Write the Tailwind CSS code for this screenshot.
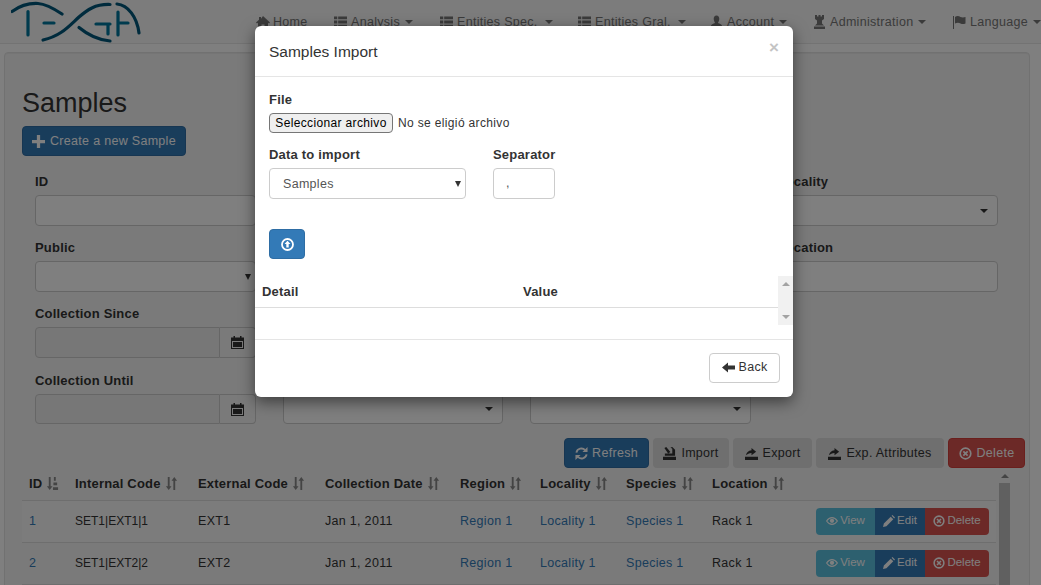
<!DOCTYPE html>
<html lang="en">
<head>
<meta charset="utf-8">
<title>Samples</title>
<script src="https://cdn.jsdelivr.net/npm/@tailwindcss/browser@4"></script>
</head>
<body class="relative h-[585px] w-[1041px] overflow-hidden bg-white font-['Liberation_Sans',Arial,sans-serif] text-[12.5px] tracking-[0.3px] text-[#333]">
<svg class="hidden">
  <symbol id="list" viewBox="0 0 14 14"><path fill="currentColor" d="M0 1h3.5v3H0zM4.5 1H14v3H4.500zM0 5.500h3.500v3H0zM4.500 5.500H14v3H4.500zM0 10h3.500v3H0zM4.500 10H14v3H4.500z"/></symbol>
  <symbol id="export" viewBox="0 0 14 14"><path fill="currentColor" d="M0 10.500h14V14H0zM1 9c.5-3 2.500-5 6-5.500V1l5 4-5 4V6.500C4.500 6.700 2.500 7.500 1 9z"/></symbol>
  <symbol id="import" viewBox="0 0 14 14"><path fill="currentColor" d="M0 10.500h14V14H0zM2 9.500V7h8V2L8 .5l2-.5 3 3v6.500zM1.500 1l2-1L8 5.500 5.500 7z"/></symbol>
  <symbol id="xcircle" viewBox="0 0 14 14"><circle cx="7" cy="7" r="5.700" fill="none" stroke="currentColor" stroke-width="1.800"/><path d="M4.700 4.700l4.600 4.600M9.300 4.700l-4.600 4.600" stroke="currentColor" stroke-width="1.800"/></symbol>
  <symbol id="eye" viewBox="0 0 14 14"><path fill="none" stroke="currentColor" stroke-width="1.300" d="M.7 7C2.500 4.300 4.600 3 7 3s4.500 1.300 6.300 4c-1.800 2.700-3.900 4-6.300 4S2.500 9.700.7 7z"/><circle cx="7" cy="6.800" r="2.500" fill="currentColor"/></symbol>
  <symbol id="pencil" viewBox="0 0 14 14"><path fill="currentColor" d="M1 10l8-8 3 3-8 8-4 1zM10 1l1-1 3 3-1 1z"/></symbol>
  <symbol id="sort" viewBox="0 0 13 14"><path fill="currentColor" d="M2.500 0h2v10H6.500l-3 4-3-4h2zM8.500 4h-2l3-4 3 4h-2v10h-2z"/></symbol>
  <symbol id="sortnum" viewBox="0 0 13 14"><path fill="currentColor" d="M2.500 0h2v10H6.500l-3 4-3-4h2zM8 0h2v4H8zM7.500 6h4v3h-4zM7 11h5.500v3H7z"/></symbol>
  <symbol id="cal" viewBox="0 0 13 13"><path fill="currentColor" d="M0 1.500h2.500V0h1.500v1.500h5V0h1.500v1.500H13V13H0zM1 5v7h11V5zM2 6h9v5H2z"/></symbol>
</svg>

<nav class="flex h-[44px] items-center border-b border-[#e7e7e7] bg-[#f8f8f8]">
  <svg class="ml-[11px] h-[44px] w-[130px] shrink-0" viewBox="0 0 130 44" fill="none" stroke-linecap="round">
    <g stroke="#00577a" stroke-width="3.200">
      <path d="M1 11.500C10 5 17 3 27 3.500 35 4 42 8 51 14"/>
      <path d="M32 40C50 36 58 26 68 17 76 10 84 4 99 4.500"/>
      <path d="M68 27.500C77 35 87 40 99 41"/>
      <path d="M106 4C117 5 126 17 128 33"/>
    </g>
    <g stroke="#00769c" stroke-width="3.200">
      <path d="M17 11.500V35M33 23H43M85 24H99M97 24V34M107 12V35M107 23H117"/>
    </g>
  </svg>
  <div class="ml-[115px] flex pt-[1px] text-[#777]">
    <a class="flex w-[78px] items-center gap-[3px]"><svg class="h-[14px] w-[14px] shrink-0" viewBox="0 0 14 14"><path fill="currentColor" d="M7 1l7 6.500-1 1-1-.8V14H8.500V9.500h-3V14H2V7.700l-1 .8-1-1 3-2.800V2h2v1.800z"/></svg>Home</a>
    <a class="flex w-[106px] items-center gap-[4px]"><svg class="h-[14px] w-[13px] shrink-0"><use href="#list"/></svg>Analysis<i class="ml-[1px] border-x-4 border-t-4 border-x-transparent border-t-[#777]"></i></a>
    <a class="flex w-[138px] items-center gap-[4px]"><svg class="h-[14px] w-[13px] shrink-0"><use href="#list"/></svg>Entities Spec.<i class="ml-[3px] border-x-4 border-t-4 border-x-transparent border-t-[#777]"></i></a>
    <a class="flex w-[132px] items-center gap-[4px]"><svg class="h-[14px] w-[13px] shrink-0"><use href="#list"/></svg>Entities Gral.<i class="ml-[3px] border-x-4 border-t-4 border-x-transparent border-t-[#777]"></i></a>
    <a class="flex w-[103px] items-center gap-[4px]"><svg class="h-[14px] w-[13px] shrink-0" viewBox="0 0 14 14"><path fill="currentColor" d="M7 0c2 0 3 1.500 3 3.500S9 7 8.500 8c2 .8 4.500 1.500 4.500 3.500V14H1v-2.500C1 9.500 3.500 8.800 5.500 8 5 7 4 5.500 4 3.500S5 0 7 0z"/></svg>Account<i class="ml-[1px] border-x-4 border-t-4 border-x-transparent border-t-[#777]"></i></a>
    <a class="flex w-[140px] items-center gap-[4px]"><svg class="h-[14px] w-[13px] shrink-0" viewBox="0 0 13 14"><path fill="currentColor" d="M2 0h2v1.500h1.500V0h2v1.500H9V0h2v4l-2 1.500v3L11 10.500H2L4 8.500v-3L2 4zM1 11.500h11V14H1z"/></svg>Administration<i class="ml-[1px] border-x-4 border-t-4 border-x-transparent border-t-[#777]"></i></a>
    <a class="flex w-[88px] items-center gap-[4px]"><svg class="h-[14px] w-[13px] shrink-0" viewBox="0 0 13 14"><path fill="currentColor" d="M0 1h1v13H0zM2 2c2-1.500 4-1 5.500 0 1.500.5 3 .5 5 0v6.500c-2 .8-3.500.8-5 0C6 7.500 4 7.500 2 8.500z"/></svg>Language<i class="ml-[1px] border-x-4 border-t-4 border-x-transparent border-t-[#777]"></i></a>
  </div>
</nav>

<main class="mx-[4px] mt-[8px] h-[600px] w-[1026px] rounded border border-[#e3e3e3] bg-[#f5f5f5] pt-[33px] pl-[17px] shadow-[inset_0_1px_1px_rgba(0,0,0,.05)]">
  <h2 class="text-[27px] leading-[34px] font-normal tracking-normal">Samples</h2>
  <button class="mt-[6px] flex h-[30px] w-[164px] items-center justify-center gap-[5px] rounded border border-[#2e6da4] bg-[#337ab7] text-white"><svg class="h-[13px] w-[13px]" viewBox="0 0 12 12"><path fill="currentColor" d="M4.500 0h3v4.500H12v3H7.500V12h-3V7.500H0v-3h4.500z"/></svg>Create a new Sample</button>

  <div class="mt-[16px] ml-[13px] grid w-[963px] grid-cols-4 gap-x-[27px]">
    <div class="h-[66px]"><label class="block h-[23px] text-[13px] leading-[20px] font-bold tracking-[.2px]">ID</label><div class="h-[31px] rounded border border-[#ccc] bg-white"></div></div>
    <div class="h-[66px]"><label class="block h-[23px] text-[13px] leading-[20px] font-bold tracking-[.2px]">Internal Code</label><div class="h-[31px] rounded border border-[#ccc] bg-white"></div></div>
    <div class="h-[66px]"><label class="block h-[23px] text-[13px] leading-[20px] font-bold tracking-[.2px]">Region</label><div class="h-[31px] rounded border border-[#ccc] bg-white"></div></div>
    <div class="h-[66px]"><label class="block h-[23px] text-[13px] leading-[20px] font-bold tracking-[.2px]">Locality</label><div class="flex h-[31px] items-center justify-end rounded border border-[#ccc] bg-white pr-[9px]"><i class="border-x-4 border-t-4 border-x-transparent border-t-[#333]"></i></div></div>

    <div class="h-[66px]"><label class="block h-[23px] text-[13px] leading-[20px] font-bold tracking-[.2px]">Public</label><div class="flex h-[31px] items-center justify-end rounded border border-[#ccc] bg-white pr-[4px]"><i class="border-x-[3px] border-t-[6px] border-x-transparent border-t-[#333]"></i></div></div>
    <div class="h-[66px]"><label class="block h-[23px] text-[13px] leading-[20px] font-bold tracking-[.2px]">External Code</label><div class="h-[31px] rounded border border-[#ccc] bg-white"></div></div>
    <div class="h-[66px]"><label class="block h-[23px] text-[13px] leading-[20px] font-bold tracking-[.2px]">Species</label><div class="h-[31px] rounded border border-[#ccc] bg-white"></div></div>
    <div class="h-[66px]"><label class="block h-[23px] text-[13px] leading-[20px] font-bold tracking-[.2px]">Location</label><div class="h-[31px] rounded border border-[#ccc] bg-white"></div></div>

    <div class="h-[67px]"><label class="block h-[23px] text-[13px] leading-[20px] font-bold tracking-[.2px]">Collection Since</label><div class="flex h-[31px]"><div class="flex-1 rounded-l border border-[#ccc] bg-[#eee]"></div><div class="flex w-[36px] items-center justify-center rounded-r border border-l-0 border-[#ccc] bg-[#f5f5f5] text-[#333]"><svg class="h-[13px] w-[13px]"><use href="#cal"/></svg></div></div></div>
    <div class="col-span-3 h-[67px]"></div>

    <div><label class="block h-[23px] text-[13px] leading-[20px] font-bold tracking-[.2px]">Collection Until</label><div class="flex h-[30px]"><div class="flex-1 rounded-l border border-[#ccc] bg-[#eee]"></div><div class="flex w-[36px] items-center justify-center rounded-r border border-l-0 border-[#ccc] bg-[#f5f5f5] text-[#333]"><svg class="h-[13px] w-[13px]"><use href="#cal"/></svg></div></div></div>
    <div><div class="mt-[23px] flex h-[30px] items-center justify-end rounded border border-[#ccc] bg-white pr-[9px]"><i class="border-x-4 border-t-4 border-x-transparent border-t-[#333]"></i></div></div>
    <div><div class="mt-[23px] flex h-[30px] items-center justify-end rounded border border-[#ccc] bg-white pr-[9px]"><i class="border-x-4 border-t-4 border-x-transparent border-t-[#333]"></i></div></div>
    <div></div>
  </div>

  <div class="mt-[14px] flex w-[1003px] justify-end gap-[4px]">
    <button class="flex h-[30px] w-[85px] items-center justify-center gap-[4px] rounded border border-[#2e6da4] bg-[#337ab7] pt-[1px] text-white"><svg class="h-[13px] w-[13px]" viewBox="0 0 14 14" fill="none" stroke="currentColor" stroke-width="2"><path d="M1.500 6A5.500 5.500 0 0 1 11 3.500M12.500 8A5.500 5.500 0 0 1 3 10.500"/><path fill="currentColor" stroke="none" d="M13.500 0v5.500H8zM.5 14V8.500H6z"/></svg>Refresh</button>
    <button class="flex h-[30px] w-[76px] items-center justify-center gap-[5px] rounded bg-[#dedede] pt-[1px]"><svg class="h-[13px] w-[13px]"><use href="#import"/></svg>Import</button>
    <button class="flex h-[30px] w-[79px] items-center justify-center gap-[5px] rounded bg-[#dedede] pt-[1px]"><svg class="h-[13px] w-[13px]"><use href="#export"/></svg>Export</button>
    <button class="flex h-[30px] w-[128px] items-center justify-center gap-[5px] rounded bg-[#dedede] pt-[1px]"><svg class="h-[13px] w-[13px]"><use href="#export"/></svg>Exp. Attributes</button>
    <button class="flex h-[30px] w-[77px] items-center justify-center gap-[5px] rounded border border-[#d43f3a] bg-[#d9534f] pt-[1px] text-white"><svg class="h-[13px] w-[13px]"><use href="#xcircle"/></svg>Delete</button>
  </div>

  <div class="mt-[1px] flex items-start">
    <table class="w-[974px] table-fixed border-collapse text-left">
      <colgroup><col class="w-[46px]"><col class="w-[123px]"><col class="w-[127px]"><col class="w-[135px]"><col class="w-[80px]"><col class="w-[86px]"><col class="w-[86px]"><col class="w-[291px]"></colgroup>
      <thead>
        <tr class="h-[31px] border-b border-[#ddd] text-[13px] font-bold tracking-[.2px]">
          <th class="px-[7px] pb-[2px]"><span class="flex items-center gap-[4px]">ID<svg class="h-[13px] w-[13px] text-[#888]"><use href="#sortnum"/></svg></span></th>
          <th class="px-[7px] pb-[2px]"><span class="flex items-center gap-[4px]">Internal Code<svg class="h-[13px] w-[13px] text-[#888]"><use href="#sort"/></svg></span></th>
          <th class="px-[7px] pb-[2px]"><span class="flex items-center gap-[4px]">External Code<svg class="h-[13px] w-[13px] text-[#888]"><use href="#sort"/></svg></span></th>
          <th class="px-[7px] pb-[2px]"><span class="flex items-center gap-[4px]">Collection Date<svg class="h-[13px] w-[13px] text-[#888]"><use href="#sort"/></svg></span></th>
          <th class="px-[7px] pb-[2px]"><span class="flex items-center gap-[4px]">Region<svg class="h-[13px] w-[13px] text-[#888]"><use href="#sort"/></svg></span></th>
          <th class="px-[7px] pb-[2px]"><span class="flex items-center gap-[4px]">Locality<svg class="h-[13px] w-[13px] text-[#888]"><use href="#sort"/></svg></span></th>
          <th class="px-[7px] pb-[2px]"><span class="flex items-center gap-[4px]">Species<svg class="h-[13px] w-[13px] text-[#888]"><use href="#sort"/></svg></span></th>
          <th class="px-[7px] pb-[2px]"><span class="flex items-center gap-[4px]">Location<svg class="h-[13px] w-[13px] text-[#888]"><use href="#sort"/></svg></span></th>
        </tr>
      </thead>
      <tbody>
        <tr class="h-[42px] border-b border-[#ddd] bg-[#f9f9f9]">
          <td class="px-[7px] text-[#337ab7]">1</td><td class="px-[7px] text-[12px] tracking-normal">SET1|EXT1|1</td><td class="px-[7px]">EXT1</td><td class="px-[7px]">Jan 1, 2011</td><td class="px-[7px] text-[#337ab7]">Region 1</td><td class="px-[7px] text-[#337ab7]">Locality 1</td><td class="px-[7px] text-[#337ab7]">Species 1</td><td class="px-[7px]">
            <div class="flex items-center justify-between">Rack 1
              <span class="flex h-[27px] text-[11.5px] tracking-normal text-white"><span class="flex w-[59px] items-center justify-center gap-[2px] rounded-l bg-[#5bc0de]"><svg class="h-[12px] w-[12px]"><use href="#eye"/></svg>View</span><span class="flex w-[50px] items-center justify-center gap-[2px] bg-[#337ab7]"><svg class="h-[12px] w-[12px]"><use href="#pencil"/></svg>Edit</span><span class="flex w-[64px] items-center justify-center gap-[2px] rounded-r bg-[#d9534f]"><svg class="h-[12px] w-[12px]"><use href="#xcircle"/></svg>Delete</span></span>
            </div></td>
        </tr>
        <tr class="h-[42px] border-b border-[#ddd]">
          <td class="px-[7px] text-[#337ab7]">2</td><td class="px-[7px] text-[12px] tracking-normal">SET1|EXT2|2</td><td class="px-[7px]">EXT2</td><td class="px-[7px]">Jan 1, 2011</td><td class="px-[7px] text-[#337ab7]">Region 1</td><td class="px-[7px] text-[#337ab7]">Locality 1</td><td class="px-[7px] text-[#337ab7]">Species 1</td><td class="px-[7px]">
            <div class="flex items-center justify-between">Rack 1
              <span class="flex h-[27px] text-[11.5px] tracking-normal text-white"><span class="flex w-[59px] items-center justify-center gap-[2px] rounded-l bg-[#5bc0de]"><svg class="h-[12px] w-[12px]"><use href="#eye"/></svg>View</span><span class="flex w-[50px] items-center justify-center gap-[2px] bg-[#337ab7]"><svg class="h-[12px] w-[12px]"><use href="#pencil"/></svg>Edit</span><span class="flex w-[64px] items-center justify-center gap-[2px] rounded-r bg-[#d9534f]"><svg class="h-[12px] w-[12px]"><use href="#xcircle"/></svg>Delete</span></span>
            </div></td>
        </tr>
      </tbody>
    </table>
    <div class="ml-[3px] w-[11px]"><div class="mx-auto mt-[5px] h-0 w-0 border-x-4 border-b-4 border-x-transparent border-b-[#888]"></div><div class="mt-[5px] h-[110px] bg-[#c1c1c1]"></div></div>
  </div>
</main>

<div class="absolute inset-0 bg-black/50"></div>

<section class="absolute top-[26px] left-[255px] h-[371px] w-[538px] rounded-md bg-white shadow-[0_5px_15px_rgba(0,0,0,.5)]">
  <header class="relative flex h-[51px] items-center border-b border-[#e5e5e5] pt-[2px] pl-[14px] text-[15.5px] tracking-normal">Samples Import<span class="absolute top-[12px] right-[14px] text-[17px] leading-[20px] font-bold text-[#c4c4c4]">×</span></header>
  <div class="px-[14px]">
    <label class="mt-[14px] block h-[18px] text-[13px] leading-[18px] font-bold tracking-[.2px]">File</label>
    <div class="mt-[4px] flex items-center gap-[5px] text-[12px] tracking-[.35px]"><button class="h-[20px] w-[124px] rounded-sm border border-[#767676] bg-[#efefef] text-black">Seleccionar archivo</button><span class="text-[#333]">No se eligió archivo</span></div>
    <div class="mt-[13px] flex">
      <div class="w-[224px]"><label class="block h-[22px] text-[13px] leading-[18px] font-bold tracking-[.2px]">Data to import</label><div class="flex h-[31px] w-[197px] items-center justify-between rounded border border-[#ccc] pt-[1px] pr-[4px] pl-[13px] text-[#555]">Samples<i class="border-x-[3px] border-t-[6px] border-x-transparent border-t-[#333]"></i></div></div>
      <div><label class="block h-[22px] text-[13px] leading-[18px] font-bold tracking-[.2px]">Separator</label><div class="flex h-[31px] w-[62px] items-center rounded border border-[#ccc] pl-[12px] text-[#555]">,</div></div>
    </div>
    <button class="mt-[30px] flex h-[30px] w-[36px] items-center justify-center rounded border border-[#2e6da4] bg-[#337ab7] text-white"><svg class="h-[13px] w-[13px]" viewBox="0 0 13 13"><circle cx="6.500" cy="6.500" r="5.500" fill="none" stroke="currentColor" stroke-width="1.800"/><path fill="currentColor" d="M6.500 2.800l3 3.200H7.700v3.500H5.300V6H3.500z"/></svg></button>
  </div>
  <div class="mt-[17px] flex h-[49px]">
    <div class="flex-1">
      <div class="flex h-[32px] items-center border-b border-[#ddd] pt-[1px] pl-[7px] text-[13px] font-bold tracking-[.2px]"><span class="w-[261px]">Detail</span><span>Value</span></div>
    </div>
    <div class="flex w-[15px] flex-col items-center justify-between bg-[#f1f1f1] py-[6px]"><i class="border-x-4 border-b-4 border-x-transparent border-b-[#a3a3a3]"></i><i class="border-x-4 border-t-4 border-x-transparent border-t-[#a3a3a3]"></i></div>
  </div>
  <footer class="mt-[14px] flex h-[58px] items-center justify-end border-t border-[#e5e5e5] pr-[13px] pb-[2px]">
    <button class="flex h-[30px] w-[71px] items-center justify-center gap-[4px] rounded border border-[#ccc] bg-white text-[#333]"><svg class="h-[13px] w-[13px]" viewBox="0 0 13 13"><path fill="currentColor" d="M0 6.500L6 1.500v3h7v4H6v3z"/></svg>Back</button>
  </footer>
</section>
</body>
</html>
